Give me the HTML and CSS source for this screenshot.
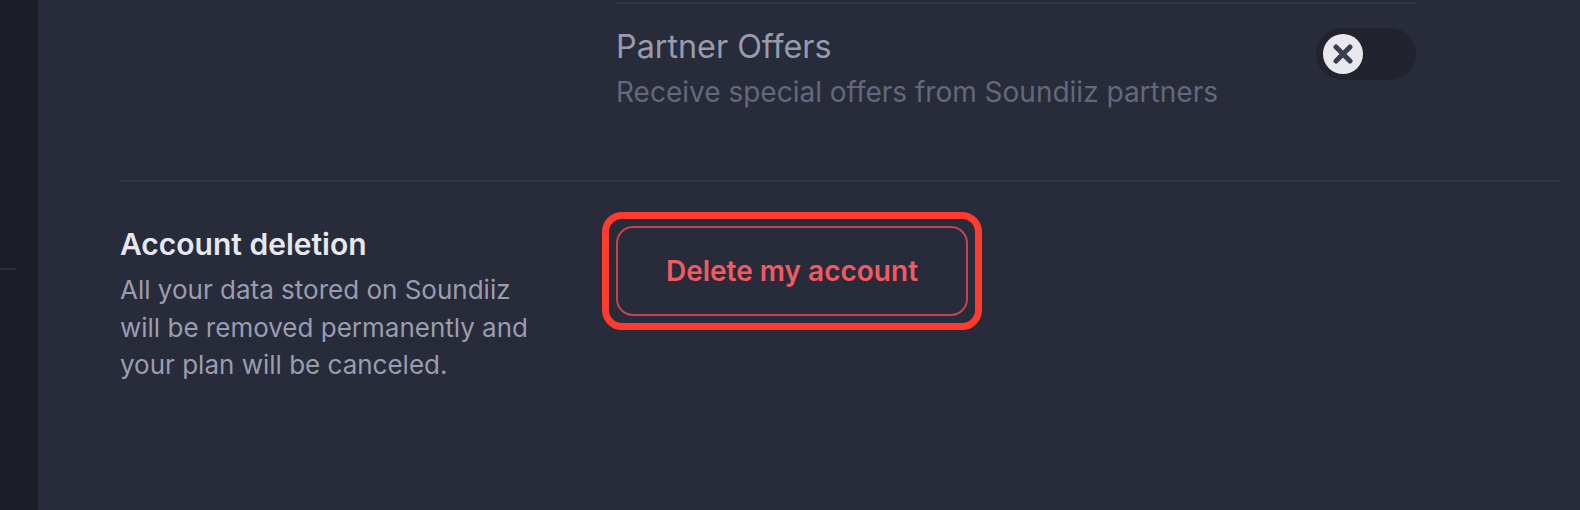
FILE: index.html
```html
<!DOCTYPE html>
<html lang="en">
<head>
<meta charset="utf-8">
<title>Account settings</title>
<link rel="stylesheet" href="styles.css">
</head>
<body>
<div class="layout">
  <aside class="sidebar">
    <div class="sidebar-rule"></div>
  </aside>
  <main class="main">
    <section class="prefs">
      <div class="prefs-spacer"></div>
      <div class="pref-list">
        <div class="pref-row">
          <div class="pref-text">
            <div class="pref-title">Partner Offers</div>
            <div class="pref-desc">Receive special offers from Soundiiz partners</div>
          </div>
          <div class="toggle">
            <span class="toggle-knob">
              <svg width="20" height="20" viewBox="0 0 20 20"><path d="M3 3 L17 17 M17 3 L3 17" stroke="#393c52" stroke-width="5" stroke-linecap="round" fill="none"/></svg>
            </span>
          </div>
        </div>
      </div>
    </section>
    <section class="deletion">
      <div class="deletion-info">
        <h2 class="deletion-title">Account deletion</h2>
        <p class="deletion-text">All your data stored on Soundiiz will be removed permanently and your plan will be canceled.</p>
      </div>
      <div class="highlight">
        <button class="danger-btn" type="button">Delete my account</button>
      </div>
    </section>
  </main>
</div>
</body>
</html>
```

FILE: styles.css
```css
* { box-sizing: border-box; }
html, body {
  margin: 0;
  padding: 0;
  height: 100%;
  background: #282b3a;
  font-family: "Inter", "Noto Sans", sans-serif;
  overflow: hidden;
}
.layout {
  display: flex;
  height: 510px;
}
.sidebar {
  width: 38px;
  flex: none;
  background: #1c1d26;
  padding-top: 268px;
}
.sidebar-rule {
  width: 16px;
  height: 2px;
  background: #2c2e39;
}
.main {
  flex: 1;
  padding: 2px 20px 0 82px;
}
.prefs {
  display: flex;
  border-bottom: 2px solid #323546;
  height: 180px;
}
.prefs-spacer {
  width: 496px;
  flex: none;
}
.pref-list {
  width: 800px;
  flex: none;
}
.pref-row {
  border-top: 2px solid #323546;
  display: flex;
  justify-content: space-between;
  align-items: flex-start;
  padding-top: 24px;
}
.pref-title {
  font-size: 32.3px;
  line-height: 38px;
  color: #989bae;
  font-weight: 400;
}
.pref-desc {
  margin-top: 7px;
  font-size: 28px;
  line-height: 38px;
  color: #64687c;
}
.toggle {
  width: 100px;
  height: 52px;
  border-radius: 26px;
  background: #21232f;
  display: flex;
  align-items: center;
  padding-left: 7px;
}
.toggle-knob {
  width: 40px;
  height: 40px;
  border-radius: 50%;
  background: #e9e9ed;
  display: flex;
  align-items: center;
  justify-content: center;
}
.deletion {
  display: flex;
  align-items: flex-start;
  padding-top: 30px;
}
.deletion-info {
  width: 482px;
  flex: none;
  padding-top: 14px;
}
.deletion-title {
  margin: 0;
  font-size: 30px;
  line-height: 36px;
  font-weight: 600;
  color: #e5e8ef;
}
.deletion-text {
  margin: 9px 0 0;
  width: 420px;
  font-size: 26px;
  line-height: 37.5px;
  color: #9a9db0;
}
.highlight {
  border: 7px solid #ff3a2f;
  border-radius: 20px;
  padding: 7px;
}
.danger-btn {
  display: flex;
  align-items: center;
  justify-content: center;
  width: 352px;
  height: 90px;
  border: 2px solid #c5434d;
  border-radius: 17px;
  background: transparent;
  color: #f25a62;
  font-family: "Inter", "Noto Sans", sans-serif;
  font-size: 28px;
  font-weight: 600;
  padding: 0;
  cursor: pointer;
}
```
